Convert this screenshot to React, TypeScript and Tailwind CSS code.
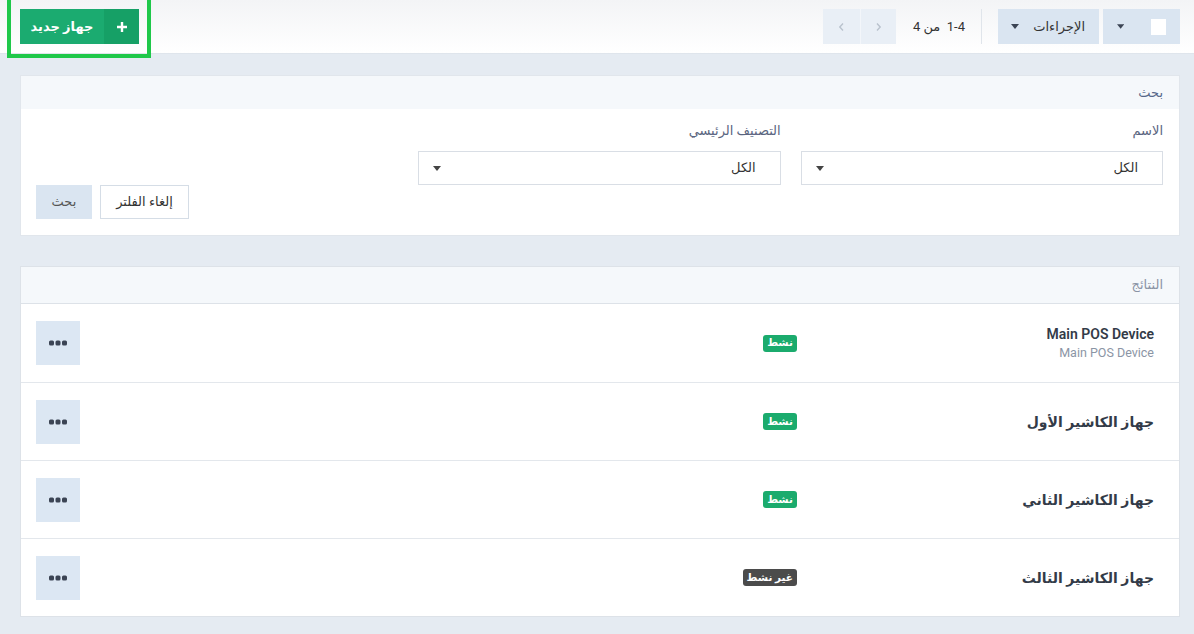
import React from 'react';

// ─── Small pieces ─────────────────────────────────────────────────────────────

function Caret({ className = '' }: { className?: string }) {
  return (
    <svg width="8" height="5" viewBox="0 0 8 5" className={className}>
      <path d="M0 0h8L4 5z" fill="currentColor" />
    </svg>
  );
}

function Chevron({ dir }: { dir: 'left' | 'right' }) {
  return (
    <svg width="7" height="10" viewBox="0 0 7 10" fill="none" stroke="currentColor" strokeWidth="1.4">
      {dir === 'left' ? <path d="M5 1.5 1.8 5 5 8.5" /> : <path d="M2 1.5 5.2 5 2 8.5" />}
    </svg>
  );
}

function Dots() {
  return (
    <svg width="18" height="6" viewBox="0 0 18 6">
      <rect x="0" y="0.5" width="5" height="5" rx="1.5" fill="#3b4454" />
      <rect x="6.5" y="0.5" width="5" height="5" rx="1.5" fill="#3b4454" />
      <rect x="13" y="0.5" width="5" height="5" rx="1.5" fill="#3b4454" />
    </svg>
  );
}

function SelectBox({ label }: { label: string }) {
  return (
    <div>
      <p className="h-[20px] leading-[20px] mb-[10px] text-[13px] text-[#5a6580]">{label}</p>
      <div className="h-[34px] flex items-center justify-between border border-[#d9dee5] bg-white pr-[24px] pl-[14px]">
        <span className="text-[13px] text-[#333]">الكل</span>
        <Caret className="text-[#444]" />
      </div>
    </div>
  );
}

// ─── Data ─────────────────────────────────────────────────────────────────────

const devices = [
  { name: 'Main POS Device', sub: 'Main POS Device', active: true },
  { name: 'جهاز الكاشير الأول', active: true },
  { name: 'جهاز الكاشير الثاني', active: true },
  { name: 'جهاز الكاشير الثالث', active: false },
];

// ─── Page ─────────────────────────────────────────────────────────────────────

export default function App() {
  return (
    <div
      dir="rtl"
      className="w-[1194px] h-[634px] overflow-hidden bg-[#e5ebf2]"
      style={{ fontFamily: 'Roboto, "DejaVu Sans", sans-serif' }}
    >
      {/* Top bar */}
      <div className="h-[54px] flex items-center justify-between pr-[14px] pl-[20px] bg-gradient-to-b from-[#f3f4f6] to-white border-b border-[#dfe5ec]">
        <div className="flex items-center">
          <button className="h-[35px] w-[77px] flex items-center justify-end gap-[27px] pr-[14px] pl-[14px] bg-[#dae5f1] text-[#3b4454]">
            <span className="w-[16px] h-[16px] bg-white" />
            <Caret />
          </button>
          <button className="h-[35px] w-[101px] mr-[4px] flex items-center justify-between pr-[14px] pl-[13px] bg-[#dae5f1] text-[#3b4454]">
            <span className="text-[13px] text-[#333]">الإجراءات</span>
            <Caret />
          </button>
          <span className="w-px h-[35px] bg-[#e0e5eb] mr-[16px]" />
          <span className="mr-[16px] text-[13px] text-[#333]">1-4&nbsp; من 4</span>
          <div className="mr-[17px] flex h-[35px]">
            <button className="w-[36px] h-full flex items-center justify-center bg-[#e9eff6] text-[#b9c2cd] border-l border-[#f3f6fa]">
              <Chevron dir="right" />
            </button>
            <button className="w-[37px] h-full flex items-center justify-center bg-[#e9eff6] text-[#b9c2cd]">
              <Chevron dir="left" />
            </button>
          </div>
        </div>

        <div className="relative">
          <span className="absolute -top-[13px] -bottom-[14px] -left-[13px] -right-[12px] border-[4px] border-[#1fc84a] pointer-events-none" />
          <button className="h-[35px] w-[119px] flex text-white">
            <span className="w-[35px] h-full flex items-center justify-center bg-[#16a066]">
              <svg width="10" height="10" viewBox="0 0 10 10">
                <path d="M3.8 0h2.4v3.8H10v2.4H6.2V10H3.8V6.2H0V3.8h3.8z" fill="white" />
              </svg>
            </span>
            <span className="flex-1 h-full flex items-center justify-center bg-[#1bab70] text-[13px] font-bold">جهاز جديد</span>
          </button>
        </div>
      </div>

      <div className="pr-[14px] pl-[20px]">
        {/* Search card */}
        <div className="mt-[21px] bg-white border border-[#e1e6ec]">
          <div className="h-[33px] flex items-center pr-[16px] bg-[#f5f8fb]">
            <span className="text-[13px] text-[#56678a]">بحث</span>
          </div>
          <div className="pt-[12px] pr-[16px] pl-[15px] pb-[16px]">
            <div className="grid grid-cols-3 gap-[20px]">
              <SelectBox label="الاسم" />
              <SelectBox label="التصنيف الرئيسي" />
              <div />
            </div>
            <div className="flex justify-end gap-[8px]">
              <button className="h-[34px] w-[89px] bg-white border border-[#d5dde6] text-[13px] text-[#333]">إلغاء الفلتر</button>
              <button className="h-[34px] w-[56px] bg-[#dae5f1] text-[13px] text-[#555]">بحث</button>
            </div>
          </div>
        </div>

        {/* Results card */}
        <div className="mt-[30px] bg-white border border-[#dde2e8]">
          <div className="h-[37px] flex items-center pr-[16px] bg-[#f5f8fb] border-b border-[#dde2e8]">
            <span className="text-[13px] text-[#8a93a5]">النتائج</span>
          </div>
          {devices.map((d, i) => (
            <div
              key={i}
              className={`h-[78px] flex items-center pr-[25px] pl-[15px] ${i > 0 ? 'border-t border-[#e3e7ec]' : ''}`}
            >
              <div className="w-[337px]">
                <p className="text-[14px] font-semibold text-[#333b48] leading-[20px]">{d.name}</p>
                {d.sub && <p className="text-[12.5px] text-[#8b95a5] leading-[18px]">{d.sub}</p>}
              </div>
              <span
                className={`mr-[20px] h-[17px] px-[4px] rounded-[3px] flex items-center text-[10.5px] font-bold text-white ${
                  d.active ? 'bg-[#1bab6d]' : 'bg-[#4b4b4b]'
                }`}
              >
                {d.active ? 'نشط' : 'غير نشط'}
              </span>
              <button className="mr-auto w-[44px] h-[44px] flex items-center justify-center bg-[#dce7f3]">
                <Dots />
              </button>
            </div>
          ))}
        </div>
      </div>
    </div>
  );
}
